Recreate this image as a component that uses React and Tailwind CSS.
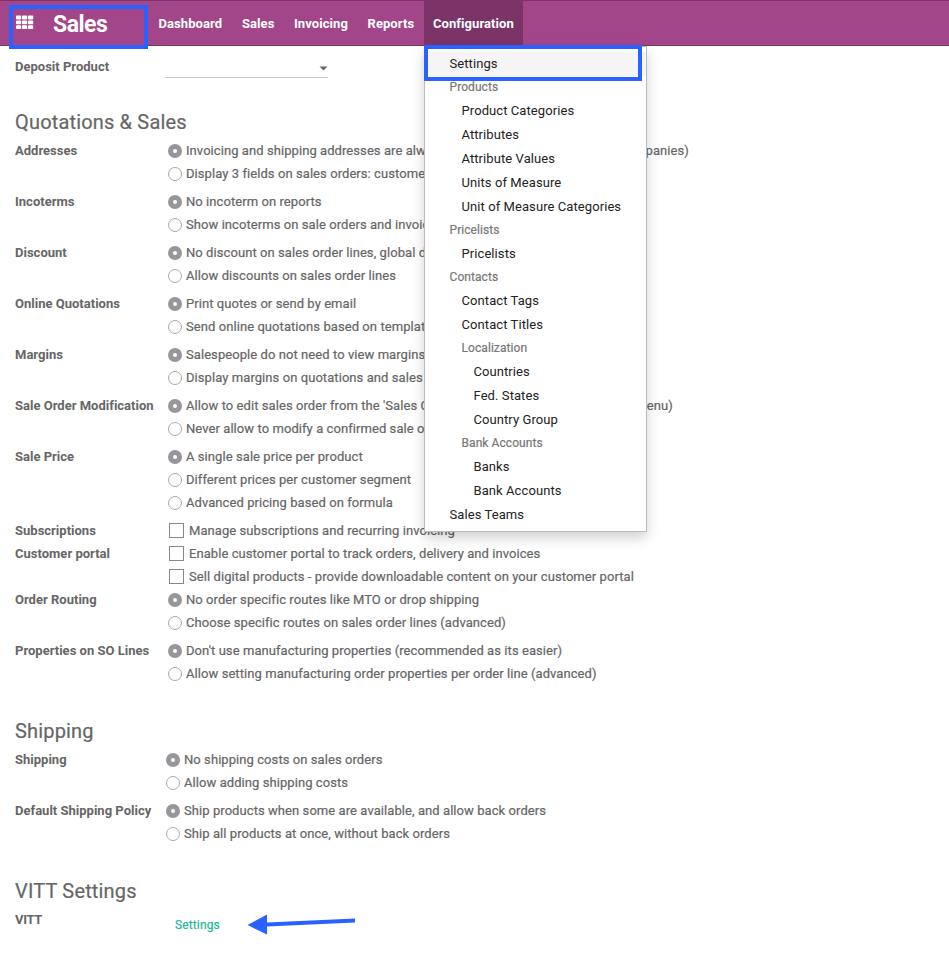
const quotations = [
  { label: 'Addresses', options: ['Invoicing and shipping addresses are always the same (Example: services companies)', 'Display 3 fields on sales orders: customer, invoice address, delivery address'] },
  { label: 'Incoterms', options: ['No incoterm on reports', 'Show incoterms on sale orders and invoices'] },
  { label: 'Discount', options: ['No discount on sales order lines, global discount only', 'Allow discounts on sales order lines'] },
  { label: 'Online Quotations', options: ['Print quotes or send by email', 'Send online quotations based on templates'] },
  { label: 'Margins', options: ['Salespeople do not need to view margins when quoting', 'Display margins on quotations and sales orders'] },
  { label: 'Sale Order Modification', options: ["Allow to edit sales order from the 'Sales Order' menu (not from the Quotation menu)", 'Never allow to modify a confirmed sale order'] },
  { label: 'Sale Price', options: ['A single sale price per product', 'Different prices per customer segment', 'Advanced pricing based on formula'] },
  { label: 'Subscriptions', check: true, options: ['Manage subscriptions and recurring invoicing'] },
  { label: 'Customer portal', check: true, options: ['Enable customer portal to track orders, delivery and invoices', 'Sell digital products - provide downloadable content on your customer portal'] },
  { label: 'Order Routing', options: ['No order specific routes like MTO or drop shipping', 'Choose specific routes on sales order lines (advanced)'] },
  { label: 'Properties on SO Lines', options: ["Don't use manufacturing properties (recommended as its easier)", 'Allow setting manufacturing order properties per order line (advanced)'] },
];

const shipping = [
  { label: 'Shipping', options: ['No shipping costs on sales orders', 'Allow adding shipping costs'] },
  { label: 'Default Shipping Policy', options: ['Ship products when some are available, and allow back orders', 'Ship all products at once, without back orders'] },
];

const menu = [
  ['Products', 0, true],
  ['Product Categories', 1],
  ['Attributes', 1],
  ['Attribute Values', 1],
  ['Units of Measure', 1],
  ['Unit of Measure Categories', 1],
  ['Pricelists', 0, true],
  ['Pricelists', 1],
  ['Contacts', 0, true],
  ['Contact Tags', 1],
  ['Contact Titles', 1],
  ['Localization', 1, true],
  ['Countries', 2],
  ['Fed. States', 2],
  ['Country Group', 2],
  ['Bank Accounts', 1, true],
  ['Banks', 2],
  ['Bank Accounts', 2],
  ['Sales Teams', 0],
];

const indents = ['pl-[24.5px]', 'pl-[36.5px]', 'pl-[48.5px]'];

function Radio({ checked }) {
  return checked ? (
    <span className="mt-px flex size-3.5 shrink-0 items-center justify-center rounded-full bg-[#98969b]">
      <span className="size-1 rounded-full bg-white" />
    </span>
  ) : (
    <span className="mt-px size-3.5 shrink-0 rounded-full border border-[#aaa] bg-white" />
  );
}

function Group({ label, options, check }) {
  return (
    <div className={check ? 'flex' : 'flex pb-[5px]'}>
      <div className="w-[153px] shrink-0 font-bold leading-[23px] tracking-[0.01px]">{label}</div>
      <div className="tracking-[0.07px] [-webkit-text-stroke:0.2px_#666]">
        {options.map((text, i) => (
          <div key={text} className="flex h-[23px] items-center whitespace-nowrap">
            {check ? (
              <span className="ml-px mr-[5px] size-[15px] shrink-0 border border-[#888] bg-white" />
            ) : (
              <span className="mr-1 flex"><Radio checked={i === 0} /></span>
            )}
            <span>{text}</span>
          </div>
        ))}
      </div>
    </div>
  );
}

function Heading({ children }) {
  return <h2 className="text-[20px] leading-[34px] tracking-[0.17px] [-webkit-text-stroke:0.2px_#666]">{children}</h2>;
}

function Menu() {
  return (
    <div className="absolute left-0 top-[45px] w-[223px] border border-[#bbb] bg-white pb-1 pt-[5px] font-normal text-[#222] shadow-[0_6px_12px_rgba(0,0,0,0.18)]">
      <div className="h-6 bg-[#f5f5f5] pl-[24.5px] leading-6">Settings</div>
      {menu.map(([text, level, header], i) => (
        <div key={i} className={`${indents[level]} ${header ? 'h-[23px] text-[12px] leading-[23px] text-[#777] [-webkit-text-stroke:0.2px_#777]' : 'h-6 tracking-[0.08px] leading-6'}`}>{text}</div>
      ))}
      <div className="absolute -left-px -top-[2px] h-9 w-[218px] border-4 border-[#2962ff]" />
    </div>
  );
}

export default function App() {
  return (
    <div className="h-[955px] w-[949px] overflow-hidden bg-white font-['Roboto','Liberation_Sans',sans-serif] text-[13px] tracking-[0.13px] text-[#666]">
      <header className="relative z-10 flex h-[46px] border-y border-[#7c3468] bg-[#a24689] font-bold text-white">
        <div className="flex w-[149px] items-start">
          <svg className="ml-4 mt-[14px]" width="18" height="15" viewBox="0 0 18 15" fill="currentColor">
            {[0.6, 5.4, 10.2].map((y) => [0, 6, 12].map((x) => <rect key={`${x}-${y}`} x={x} y={y} width="5.2" height="3.8" rx="0.7" />))}
          </svg>
          <span className="ml-[19px] mt-px text-[23px] leading-[45px] tracking-[-0.5px]">Sales</span>
        </div>
        <nav className="flex leading-[46px] tracking-[0.07px]">
          <span className="w-[84px] pl-[9.5px]">Dashboard</span>
          <span className="w-[52px] pl-[9px]">Sales</span>
          <span className="w-[73px] pl-[9px]">Invoicing</span>
          <span className="w-[66px] pl-[9.5px]">Reports</span>
          <div className="relative w-[99px] bg-[#7c3468] pl-[9px]">
            Configuration
            <Menu />
          </div>
        </nav>
        <div className="absolute left-[9px] top-1 h-11 w-[139px] border-4 border-[#2962ff]" />
      </header>

      <main className="pl-[15px]">
        <div className="flex h-[59px] pt-[9px]">
          <div className="w-[150px] font-bold leading-[23px] tracking-[0.01px]">Deposit Product</div>
          <div className="flex h-[23px] w-[163px] items-center justify-end border-b border-[#ccc]">
            <svg className="mt-[4px]" width="9" height="5" viewBox="0 0 9 5"><path d="M0.5 0.5h8l-4 4z" fill="#666" /></svg>
          </div>
        </div>
        <Heading>Quotations &amp; Sales</Heading>
        {quotations.map((g) => <Group key={g.label} {...g} />)}
        <div className="h-6" />
        <Heading>Shipping</Heading>
        <div className="[&>div>div:first-child]:w-[151px]">
          {shipping.map((g) => <Group key={g.label} {...g} />)}
        </div>
        <div className="h-6" />
        <Heading>VITT Settings</Heading>
        <div className="flex">
          <div className="w-[160px] font-bold leading-[23px] tracking-[-0.3px]">VITT</div>
          <a className="mt-[6px] w-[72px] text-[12px] leading-[23px] text-[#21b799] [-webkit-text-stroke:0.2px]">Settings</a>
          <svg width="110" height="29" viewBox="0 0 110 29" fill="#2962ff">
            <path d="M0.5 17L20 6.5v8l88-4v4L20 18.5v8z" />
          </svg>
        </div>
      </main>
    </div>
  );
}
